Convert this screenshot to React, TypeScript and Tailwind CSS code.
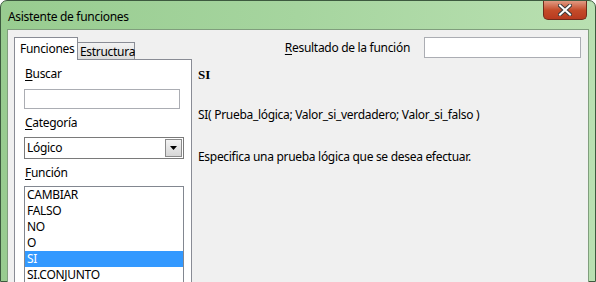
import React from "react";

const font = { fontFamily: '"Noto Sans", "Open Sans", sans-serif', letterSpacing: "-0.3px" };

const functions = ["CAMBIAR", "FALSO", "NO", "O", "SI", "SI.CONJUNTO"];

function Mnemonic({ first, rest }: { first: string; rest: string }) {
  return (
    <span>
      <span className="underline underline-offset-2">{first}</span>
      {rest}
    </span>
  );
}

export default function App() {
  return (
    <div
      className="w-[596px] h-[282px] overflow-hidden bg-white text-[12px] leading-[16px] text-black"
      style={font}
    >
      <div className="flex flex-col h-full rounded-t-[7px] border border-[#3d5a3f] bg-gradient-to-r from-[#98cc90] via-[#a6d59f] to-[#b9e0b1]">
        {/* title bar */}
        <div className="h-[28px] flex items-start justify-between shrink-0">
          <span className="pl-[7px] pt-[8px] text-[12px] leading-[16px]">Asistente de funciones</span>
          <div className="mr-[8px] w-[44px] h-[19px] rounded-b-[5px] border border-t-0 border-[#6e2b1b] bg-gradient-to-b from-[#e09a82] via-[#c44c2a] to-[#b83a1f] flex items-center justify-center">
            <svg width="14" height="12" viewBox="0 0 14 12">
              <path d="M2 1.5 L12 10.5 M12 1.5 L2 10.5" stroke="#3b3b3b" strokeWidth="4" strokeLinecap="square" />
              <path d="M2 1.5 L12 10.5 M12 1.5 L2 10.5" stroke="#ffffff" strokeWidth="2" strokeLinecap="square" />
            </svg>
          </div>
        </div>

        {/* client area */}
        <div className="flex-1 mx-[6px] border-x border-t border-[#809e7d] bg-[#f0f0f0] flex pl-[6px] pt-[7px]">
          {/* left tab column */}
          <div className="w-[178px] flex flex-col">
            <div className="flex items-end h-[23px] relative z-10">
              <div className="w-[64px] h-[23px] border border-b-0 border-[#898c95] bg-white pl-[5px] pt-[3px]">
                Funciones
              </div>
              <div className="w-[58px] h-[18px] -ml-px border border-[#898c95] bg-gradient-to-b from-[#f2f2f2] to-[#dcdcdc] pl-[2px] pt-[1px] leading-[15px]">
                Estructura
              </div>
            </div>
            <div className="flex-1 -mt-px border border-[#898c95] bg-white pl-[9px] pt-[6px]">
              <div className="h-[16px] pl-px">
                <Mnemonic first="B" rest="uscar" />
              </div>
              <div className="mt-[7px] w-[156px] h-[20px] border border-[#abadb3] bg-white" />
              <div className="mt-[6px] h-[16px] pl-px">
                <Mnemonic first="C" rest="ategoría" />
              </div>
              <div className="mt-[6px] w-[160px] h-[22px] border border-[#7a7a7a] bg-white flex items-center">
                <span className="flex-1 pl-[2px]">Lógico</span>
                <div className="w-[17px] h-[18px] mr-px border border-[#8a8a8a] bg-gradient-to-b from-[#f3f3f3] to-[#d6d6d6] flex items-center justify-center">
                  <svg width="7" height="4" viewBox="0 0 7 4">
                    <path d="M0 0 H7 L3.5 4 Z" fill="#000" />
                  </svg>
                </div>
              </div>
              <div className="mt-[6px] h-[16px] pl-px">
                <Mnemonic first="F" rest="unción" />
              </div>
              <div className="mt-[5px] w-[160px] border border-[#828790] bg-white">
                {functions.map((f) => (
                  <div
                    key={f}
                    className={`h-[16px] pl-[2px] ${f === "SI" ? "bg-[#3399ff] text-white" : ""}`}
                  >
                    {f}
                  </div>
                ))}
              </div>
            </div>
          </div>

          {/* right side */}
          <div className="flex-1 pl-[6px] flex flex-col">
            <div className="flex items-center justify-end pr-[7px] h-[21px]">
              <span className="mr-[14px]">
                <Mnemonic first="R" rest="esultado de la función" />
              </span>
              <div className="w-[157px] h-[21px] border border-[#abadb3] bg-white" />
            </div>
            <div className="mt-[9px] font-bold text-[13px]" style={{ fontFamily: '"Liberation Serif", serif', letterSpacing: 0 }}>
              SI
            </div>
            <div className="mt-[24px]">SI( Prueba_lógica; Valor_si_verdadero; Valor_si_falso )</div>
            <div className="mt-[26px]">Especifica una prueba lógica que se desea efectuar.</div>
          </div>
        </div>
      </div>
    </div>
  );
}
